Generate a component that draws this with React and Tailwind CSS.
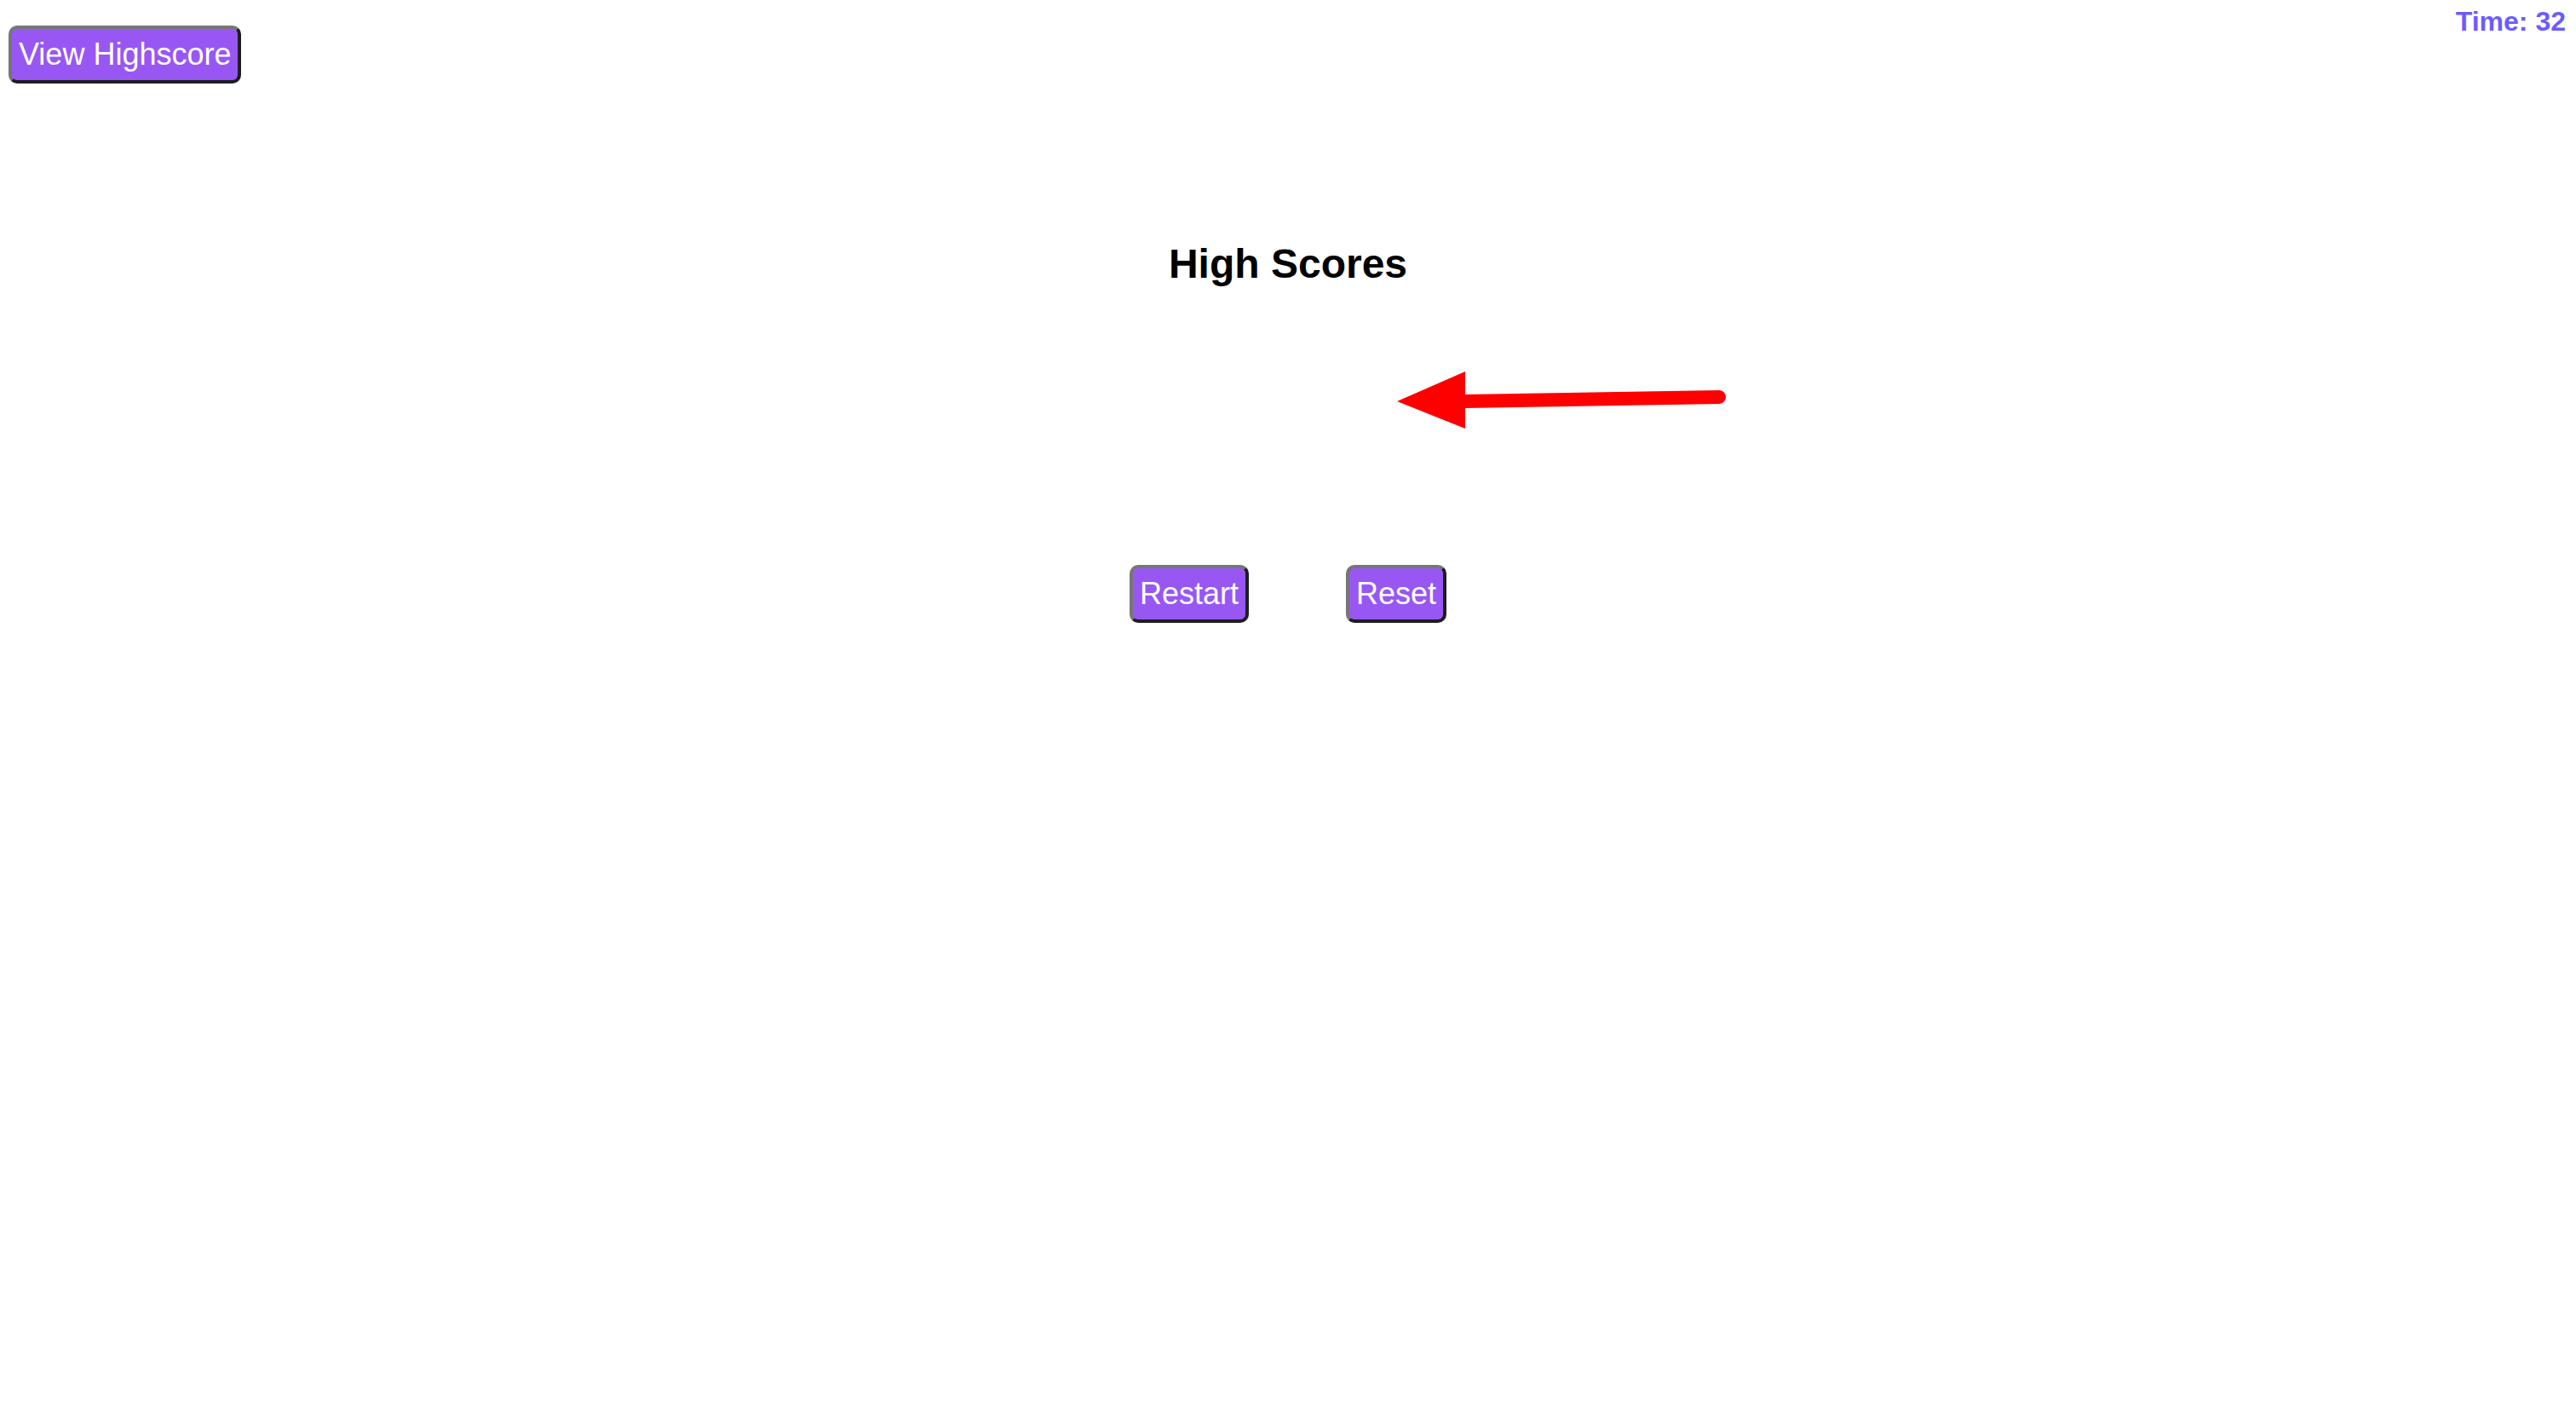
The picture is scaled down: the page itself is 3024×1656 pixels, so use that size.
const btn =
  "h-[68px] px-[8px] rounded-[10px] border-4 border-t-[#767676] border-l-[#767676] border-r-[#1e1e1e] border-b-[#1e1e1e] bg-[#9857f3] text-white text-[36px] leading-none";

function Arrow() {
  return (
    <svg width="392" height="70" viewBox="0 0 392 70" className="block">
      <line x1="80" y1="36" x2="380" y2="31" stroke="#ff0000" strokeWidth="16" strokeLinecap="round" />
      <polygon points="2,36 82,1 82,68" fill="#ff0000" />
    </svg>
  );
}

export default function App() {
  return (
    <div className="min-h-screen bg-white font-['Liberation_Sans',Arial,sans-serif]">
      <div className="flex justify-between items-start">
        <button className={`${btn} mt-[30px] ml-[10px] h-[67px]`}>View Highscore</button>
        <div className="mt-[9px] mr-[12px] text-[32px] leading-none font-bold text-[#6c5cff]">Time: 32</div>
      </div>

      <div className="flex flex-col items-center">
        <h2 className="mt-[188px] text-[48px] leading-none font-bold text-black">High Scores</h2>
      </div>

      <div className="mt-[101px] ml-[calc(50%+126px)]">
        <Arrow />
      </div>

      <div className="mt-[158px] flex justify-center gap-[114px]">
        <button className={btn}>Restart</button>
        <button className={btn}>Reset</button>
      </div>
    </div>
  );
}
